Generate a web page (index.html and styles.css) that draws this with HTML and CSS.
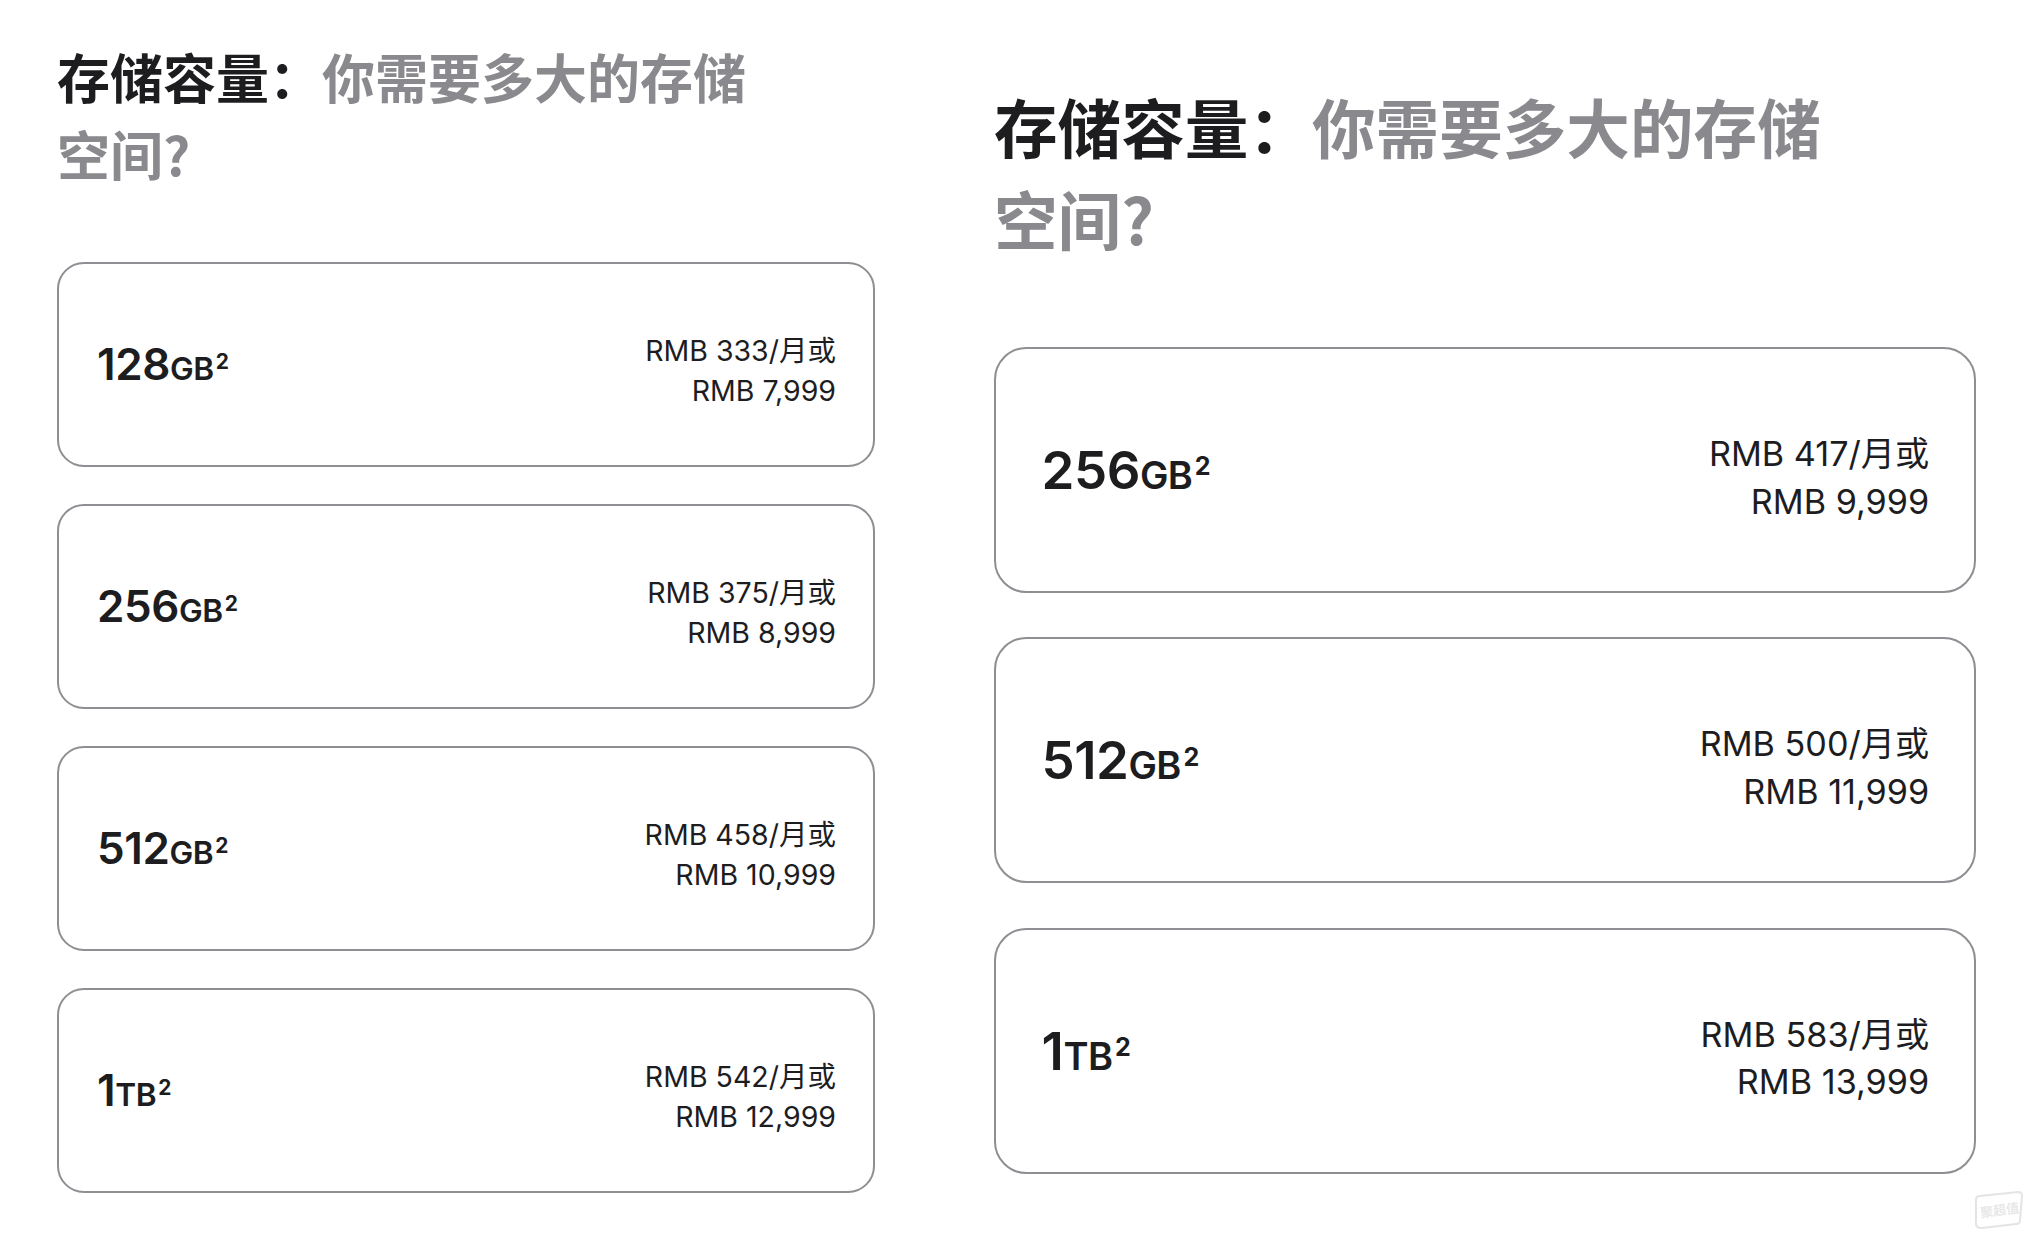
FILE: index.html
```html
<!DOCTYPE html>
<html lang="zh-CN">
<head>
  <meta charset="UTF-8">
  <meta name="viewport" content="width=device-width, initial-scale=1.0">
  <title>存储容量</title>
  <link rel="stylesheet" href="styles.css">
</head>
<body>
  <div class="page">
    <section class="panel">
      <h2 class="title"><span class="title-key">存储容量：</span>你需要多大的存储空间?</h2>
      <div class="option">
        <div class="size">128<span class="unit">GB<sup>2</sup></span></div>
        <div class="price">RMB 333/月或<br>RMB 7,999</div>
      </div>
      <div class="option">
        <div class="size">256<span class="unit">GB<sup>2</sup></span></div>
        <div class="price">RMB 375/月或<br>RMB 8,999</div>
      </div>
      <div class="option">
        <div class="size">512<span class="unit">GB<sup>2</sup></span></div>
        <div class="price">RMB 458/月或<br>RMB 10,999</div>
      </div>
      <div class="option">
        <div class="size">1<span class="unit">TB<sup>2</sup></span></div>
        <div class="price">RMB 542/月或<br>RMB 12,999</div>
      </div>
    </section>

    <section class="panel panel-large">
      <h2 class="title"><span class="title-key">存储容量：</span>你需要多大的存储空间?</h2>
      <div class="option">
        <div class="size">256<span class="unit">GB<sup>2</sup></span></div>
        <div class="price">RMB 417/月或<br>RMB 9,999</div>
      </div>
      <div class="option">
        <div class="size">512<span class="unit">GB<sup>2</sup></span></div>
        <div class="price">RMB 500/月或<br>RMB 11,999</div>
      </div>
      <div class="option">
        <div class="size">1<span class="unit">TB<sup>2</sup></span></div>
        <div class="price">RMB 583/月或<br>RMB 13,999</div>
      </div>
    </section>
  </div>

  <div class="watermark">
    <svg width="52" height="40" viewBox="0 0 52 40">
      <path d="M8 6 L46 2 Q50 2 50 6 L48 30 Q48 34 44 34 L10 38 Q4 38 4 34 L4 10 Q4 6 8 6 Z" fill="none" stroke="#e4e4e4" stroke-width="2"/>
    </svg>
    <span class="watermark-text">聚超值</span>
  </div>
</body>
</html>
```

FILE: styles.css
```css
body {
  margin: 0;
  background-color: #fff;
  color: #1d1d1f;
  font-family: Inter, "Noto Sans CJK SC", sans-serif;
}
.page {
  display: flex;
  align-items: flex-start;
  padding-left: 57px;
}
.panel {
  font-size: 10px;
  width: 81.8em;
  padding-top: 3.8em;
}
.panel-large {
  font-size: 12px;
  margin-left: 119px;
  margin-top: 33px;
}
.title {
  font-size: 5.3em;
  line-height: 1.45;
  font-weight: 600;
  color: #8a8a8e;
  max-width: 13.2em;
  margin: 0 0 1.32em 0;
  font-family: "Noto Sans CJK SC", sans-serif;
}
.title-key {
  color: #1d1d1f;
  font-weight: 700;
}
.option {
  display: flex;
  align-items: center;
  justify-content: space-between;
  box-sizing: border-box;
  height: 20.5em;
  padding: 0 3.7em 0 3.8em;
  margin-bottom: 3.7em;
  border: 2px solid #8e8e93;
  border-radius: 2.7em;
}
.size {
  font-size: 4.4em;
  font-weight: 600;
  letter-spacing: -0.01em;
}
.unit {
  font-size: 0.72em;
  font-weight: 600;
}
.unit sup {
  font-size: 0.66em;
  font-weight: 700;
  vertical-align: 0.55em;
  line-height: 0;
  margin-left: 0.1em;
}
.price {
  font-size: 2.85em;
  line-height: 1.4;
  text-align: right;
  font-weight: 400;
  margin-top: 0.45em;
}
.watermark {
  position: absolute;
  right: 8px;
  bottom: 6px;
  width: 52px;
  height: 40px;
}
.watermark svg {
  display: block;
}
.watermark-text {
  position: absolute;
  left: 8px;
  top: 10px;
  font-size: 13px;
  font-weight: 700;
  color: #e8e8e8;
  transform: rotate(-8deg);
  font-family: "Noto Sans CJK SC", sans-serif;
}
```
